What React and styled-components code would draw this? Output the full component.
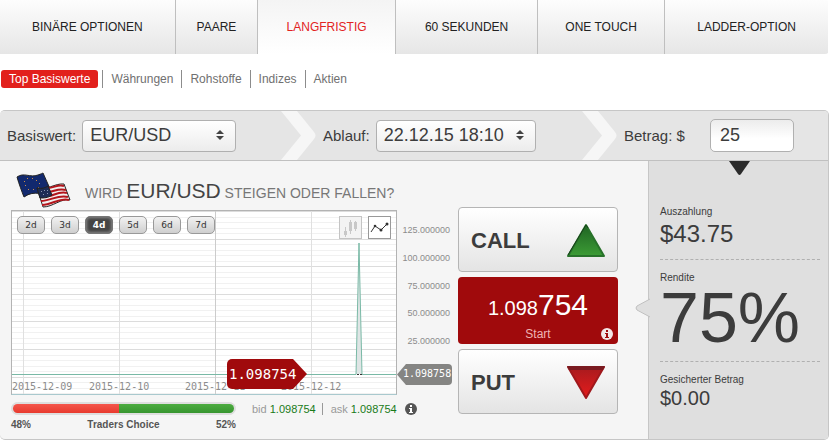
import { useState } from 'react';
import styled, { createGlobalStyle } from 'styled-components';


const GlobalStyle = createGlobalStyle`
    * {
        box-sizing: border-box;
    }
    body {
        margin: 0;
        background: white;
        color: #3c3c3c;
        font-family: "Liberation Sans", Arial, sans-serif;
    }
    button, input, select {
        margin: 0;
        font-family: inherit;
        color: inherit;
    }
`;
const TabBar = styled.nav`
    display: flex;
    height: 54px;
    border-radius: 0 4px 4px 0;
    overflow: hidden;
`;
const Tab = styled.a`
    flex: ${props => props.$grow} 1 0;
    display: flex;
    align-items: center;
    justify-content: center;
    padding-bottom: 1px;
    font-size: 12px;
    text-decoration: none;
    white-space: nowrap;
    color: ${props => props.$active ? '#e2231f' : '#222'};
    background: ${props => props.$active ? 'linear-gradient(#f4f4f4, #fff)' : 'linear-gradient(#fdfdfd, #e6e6e6)'};
    border-right: 1px solid #bfbfbf;
    &:last-child {
        border-right-color: white;
    }
`;
const SubNav = styled.nav`
    display: flex;
    height: 18px;
    margin: 16px 0 22px 1px;
`;
const SubLink = styled.a`
    padding: 0 8px;
    font-size: 12px;
    line-height: 18px;
    text-decoration: none;
    color: ${props => props.$active ? 'white' : '#707070'};
    background: ${props => props.$active ? '#e2201c' : 'none'};
    border-radius: ${props => props.$active ? '3px' : '0'};
    margin-right: ${props => props.$active ? '4px' : '0'};
    & + & {
        border-left: 1px solid #8c8c8c;
    }
`;
const Panel = styled.main`
    border: 1px solid #c6c6c6;
    border-left: none;
    border-radius: 5px;
    background: #f5f5f5;
    overflow: hidden;
`;
const OrderBar = styled.div`
    display: flex;
    height: 50px;
    background: #e5e5e5;
    border-bottom: 1px solid #c0c0c0;
`;
const Step = styled.div`
    flex: ${props => props.$grow} 1 0;
    display: flex;
    align-items: center;
    padding-left: 7px;
    gap: 6px;
`;
const StepLabel = styled.label`
    font-size: 15px;
    white-space: nowrap;
`;
const SelectBox = styled.div`
    position: relative;
    width: ${props => props.$wide ? '160px' : '154px'};
    svg {
        position: absolute;
        right: 12px;
        top: 10px;
        pointer-events: none;
    }
`;
const Select = styled.select`
    appearance: none;
    display: block;
    width: 100%;
    height: 32px;
    padding: 0 7px 2px;
    font-size: 18px;
    border: 1px solid #b0b0b0;
    border-radius: 4px;
    background: linear-gradient(#fff, #ececec);
`;
const AmountInput = styled.input`
    width: 84px;
    height: 33px;
    margin-left: 19px;
    padding: 0 9px;
    font-size: 18px;
    border: 1px solid #b0b0b0;
    border-radius: 5px;
    background: linear-gradient(#ececec, #fff 60%);
`;
const Body = styled.div`
    display: flex;
`;
const Main = styled.section`
    flex: 1;
    min-width: 0;
    padding: 10px 30px 0 11px;
`;
const Question = styled.h1`
    display: flex;
    align-items: center;
    height: 39px;
    margin: 0;
    gap: 13px;
    padding-left: 4px;
    font-size: 14px;
    font-weight: normal;
    color: #777;
    white-space: nowrap;
    strong {
        font-size: 21px;
        font-weight: normal;
        color: #444;
    }
`;
const Trade = styled.div`
    display: flex;
`;
const ChartColumn = styled.div`
    flex: 1;
    min-width: 0;
`;
const Chart = styled.div`
    position: relative;
    height: 185px;
    background: white;
    border: 1px solid #b3b3b3;
    border-bottom-color: #a9c9ce;
    & > svg {
        display: block;
        width: 100%;
        height: 100%;
    }
`;
const Toolbar = styled.div`
    position: absolute;
    top: 5px;
    left: 5px;
    right: 5px;
    display: flex;
    gap: 6px;
`;
const RangeButton = styled.button`
    width: 28px;
    height: 18px;
    padding: 0;
    font: 9px "DejaVu Sans", sans-serif;
    font-weight: ${props => props.$active ? 'bold' : 'normal'};
    line-height: 14px;
    border: 1px solid ${props => props.$active ? '#777' : '#999'};
    border-radius: 5px;
    color: ${props => props.$active ? 'white' : '#333'};
    background: ${props => props.$active ? '#444' : 'linear-gradient(#f2f2f2, #cfcfcf)'};
    box-shadow: ${props => props.$active ? 'inset 0 0 3px 1px #888' : 'none'};
`;
const TypeButton = styled.button`
    width: 23px;
    height: 23px;
    padding: 0;
    border: 1px solid ${props => props.$active ? '#999' : '#c4c4c4'};
    background: ${props => props.$active ? 'white' : '#f3f3f3'};
    svg {
        display: block;
    }
`;
const Spacer = styled.div`
    flex: 1;
`;
const PriceTag = styled.div`
    position: absolute;
    top: 148px;
    left: 215px;
    width: 80px;
    height: 30px;
    padding-left: 2px;
    font: 14px "DejaVu Sans Mono", monospace;
    line-height: 30px;
    color: white;
    background: #a00a0c;
    border-radius: 5px;
    clip-path: polygon(0 0, 66px 0, 100% 50%, 66px 100%, 0 100%);
`;
const Axis = styled.div`
    position: relative;
    width: 61px;
    height: 185px;
    padding-top: 15px;
`;
const AxisLabels = styled.div`
    display: flex;
    flex-direction: column;
    justify-content: space-between;
    height: 122px;
    margin-right: 8px;
    font-size: 9px;
    line-height: 11px;
    text-align: right;
    color: #8c8c8c;
`;
const AxisTag = styled.div`
    position: absolute;
    left: 0;
    top: 154px;
    width: 55px;
    height: 21px;
    padding-left: 6px;
    font: 10px "DejaVu Sans Mono", monospace;
    line-height: 20px;
    color: white;
    background: #858583;
    border-radius: 4px;
    clip-path: polygon(0 50%, 9px 0, 100% 0, 100% 100%, 9px 100%);
`;
const ChartFooter = styled.div`
    display: flex;
    gap: 16px;
    padding-top: 7px;
`;
const Traders = styled.div`
    flex: none;
    width: 225px;
`;
const TradersBar = styled.div`
    display: flex;
    height: 13px;
    padding: 1px;
    border: 1px solid #dedede;
    border-radius: 7px;
    background: #dedede;
    overflow: hidden;
`;
const Share = styled.div`
    background: ${props => props.$up ? 'linear-gradient(#4dac40, #36952f)' : 'linear-gradient(#f4564c, #e83a2e)'};
    border-radius: ${props => props.$up ? '0 6px 6px 0' : '6px 0 0 6px'};
`;
const TradersText = styled.div`
    display: flex;
    justify-content: space-between;
    margin-top: 4px;
    font-size: 10px;
    font-weight: bold;
    line-height: 12px;
    color: #555;
`;
const Quotes = styled.div`
    display: flex;
    align-items: center;
    height: 14px;
    font-size: 11px;
    white-space: nowrap;
    color: #999;
    span + span {
        margin-left: 6px;
        padding-left: 8px;
        border-left: 1px solid #999;
    }
    b {
        font-weight: normal;
        color: #187a18;
    }
    svg {
        flex: none;
        margin-left: 8px;
    }
`;
const Actions = styled.div`
    display: flex;
    flex-direction: column;
    gap: 5px;
    width: 160px;
    margin-top: -3px;
    padding-bottom: 25px;
`;
const ActionButton = styled.button`
    display: flex;
    align-items: center;
    justify-content: space-between;
    height: 65px;
    padding: 2px 11px 0 12px;
    font-size: 22px;
    font-weight: bold;
    border: 1px solid #b5b5b5;
    border-radius: 4px;
    background: linear-gradient(#fff, #e4e4e4);
`;
const StartBox = styled.div`
    position: relative;
    height: 67px;
    padding-top: 11px;
    text-align: center;
    font-size: 20px;
    line-height: 34px;
    color: white;
    background: #a00a0c;
    border-radius: 4px;
    big {
        font-size: 30px;
    }
    svg {
        position: absolute;
        right: 5px;
        bottom: 4px;
    }
`;
const StartText = styled.div`
    font-size: 12px;
    line-height: 18px;
    color: #eeb4b4;
`;
const Side = styled.aside`
    position: relative;
    width: 180px;
    padding: 45px 8px 28px 11px;
    background: #dfdfdf;
    border-left: 1px solid #c6c6c6;
`;
const Caret = styled.svg`
    position: absolute;
    top: 0;
    left: 80px;
`;
const Notch = styled.svg`
    position: absolute;
    top: 137px;
    left: -14px;
`;
const Figure = styled.div`
    & + & {
        margin-top: 9px;
        padding-top: 12px;
        border-top: 1px dashed #b0b0b0;
    }
`;
const FigureLabel = styled.div`
    font-size: 10px;
    line-height: 12px;
`;
const FigureValue = styled.div`
    font-size: ${props => props.$size};
    line-height: ${props => props.$line};
`;

const tabs = [
    {text: 'BINÄRE OPTIONEN', grow: 176},
    {text: 'PAARE', grow: 82},
    {text: 'LANGFRISTIG', grow: 138},
    {text: '60 SEKUNDEN', grow: 142},
    {text: 'ONE TOUCH', grow: 127},
    {text: 'LADDER-OPTION', grow: 164},
];
const groups = ['Top Basiswerte', 'Währungen', 'Rohstoffe', 'Indizes', 'Aktien'];
const ranges = ['2d', '3d', '4d', '5d', '6d', '7d'];
const levels = ['125.000000', '100.000000', '75.000000', '50.000000', '25.000000'];
const days = [
    {text: '2015-12-09', x: 0, line: 11},
    {text: '2015-12-10', x: 77, line: 107},
    {text: '2015-12-11', x: 173, line: 203},
    {text: '2015-12-12', x: 269, line: 299},
];

const Chevron = () => (
    <svg width="35" height="49" viewBox="0 0 35 49">
        <path d="M0 0H16L33 21Q36 24.5 33 28L16 49H0L20 24.5Z" fill="#f6f6f6" />
    </svg>
);

const Arrows = () => (
    <svg width="8" height="10" viewBox="0 0 8 10">
        <path d="M4 0L8 4H0ZM0 6H8L4 10Z" fill="#444" />
    </svg>
);

const InfoIcon = ({bg, fg}) => (
    <svg width="12" height="12" viewBox="0 0 12 12">
        <circle cx="6" cy="6" r="6" fill={bg} />
        <path d="M5 2H7V4H5ZM4 5H7V9H8V10H4V9H5V6H4Z" fill={fg} />
    </svg>
);

const Flags = () => (
    <svg width="57" height="38" viewBox="0 0 57 38">
        <path d="M2 5C9 0 15 6 23 3C26 2 28 1 28 1L36 19C28 25 20 17 9 25C7 20 4 12 2 5Z" fill="#12296e" stroke="#222" />
        <g fill="#c98d4a">
            <rect x="12" y="6" width="1" height="1" />
            <rect x="17" y="6" width="1" height="1" />
            <rect x="21" y="8" width="1" height="1" />
            <rect x="9" y="9" width="1" height="1" />
            <rect x="10" y="13" width="1" height="1" />
            <rect x="13" y="17" width="1" height="1" />
            <rect x="18" y="17" width="1" height="1" />
            <rect x="23" y="15" width="1" height="1" />
            <rect x="24" y="11" width="1" height="1" />
        </g>
        <path d="M22 16C31 19 40 11 49 12L55 28C46 26 38 35 28 35Z" fill="#f2eeee" stroke="#222" />
        <g fill="none" stroke="#b3151b" strokeWidth="2">
            <path d="M33 16C39 16 43 12 49 14" />
            <path d="M34 20C40 19 44 16 51 18" />
            <path d="M35 24C41 22 46 19 52 21" />
            <path d="M26 29C35 29 44 22 53 25" />
            <path d="M27 33C37 33 45 25 54 28" />
        </g>
        <path d="M22 16C27 17 30 16 33 14L37 23C33 26 29 26 25 26Z" fill="#1d2c55" stroke="#222" />
        <g fill="#8c97b5">
            <rect x="26" y="19" width="1" height="1" />
            <rect x="29" y="18" width="1" height="1" />
            <rect x="32" y="18" width="1" height="1" />
            <rect x="28" y="22" width="1" height="1" />
            <rect x="32" y="21" width="1" height="1" />
        </g>
    </svg>
);

const CandleIcon = () => (
    <svg width="21" height="21" viewBox="0 0 21 21" fill="#c8c8c8">
        <path d="M5 10H6V14H7V18H6V20H5V18H4V14H5ZM10 3H11V5H12V14H11V17H10V14H9V5H10ZM15 4H16V5H17V12H16V14H15V12H14V5H15Z" />
    </svg>
);

const LineIcon = () => (
    <svg width="21" height="21" viewBox="0 0 21 21">
        <path d="M2 15L6 9L12 13L18 7" fill="none" stroke="#333" />
        <circle cx="6" cy="9" r="1.3" fill="#333" />
        <circle cx="12" cy="13" r="1.5" fill="#333" />
        <circle cx="18" cy="7" r="1.5" fill="#333" />
    </svg>
);

const PriceGraph = () => (
    <svg viewBox="0 0 384 183" preserveAspectRatio="none">
        {Array.from({length: 34}, (_, i) => (
            <rect key={i} x="0" y={Math.round(i * 5.52)} width="384" height="1" fill={i % 5 === 0 ? '#dcdcdc' : '#f1f1f1'} />
        ))}
        {days.map(day => (
            <rect key={day.line} x={day.line} y="0" width="1" height="183" fill={day.line === 203 ? '#cccccc' : '#e0e0e0'} />
        ))}
        {days.map(day => (
            <text key={day.text} x={day.x} y="179" fontSize="10" fontFamily='"DejaVu Sans Mono", monospace' fill="#8c8c8c">{day.text}</text>
        ))}
        <path d="M344 163L347 32L350 163Z" fill="#dfe5e5" />
        <path d="M0 163.500H344L347 32L350 163.500H384" fill="none" stroke="#79b9a6" />
        <path d="M345 163.500H350" stroke="#333" strokeDasharray="2 1" />
    </svg>
);

export default function App() {
    const [range, setRange] = useState('4d');
    const [chartType, setChartType] = useState('line');
    const [amount, setAmount] = useState('25');

    return (
        <>
            <GlobalStyle />
            <TabBar>
                {tabs.map(tab => (
                    <Tab key={tab.text} href="#" $grow={tab.grow} $active={tab.text === 'LANGFRISTIG'}>{tab.text}</Tab>
                ))}
            </TabBar>
            <SubNav>
                {groups.map((group, i) => (
                    <SubLink key={group} href="#" $active={i === 0}>{group}</SubLink>
                ))}
            </SubNav>
            <Panel>
                <OrderBar>
                    <Step $grow={274}>
                        <StepLabel htmlFor="asset">Basiswert:</StepLabel>
                        <SelectBox>
                            <Select id="asset">
                                <option>EUR/USD</option>
                            </Select>
                            <Arrows />
                        </SelectBox>
                    </Step>
                    <Chevron />
                    <Step $grow={259}>
                        <StepLabel htmlFor="expiry">Ablauf:</StepLabel>
                        <SelectBox $wide>
                            <Select id="expiry">
                                <option>22.12.15 18:10</option>
                            </Select>
                            <Arrows />
                        </SelectBox>
                    </Step>
                    <Chevron />
                    <Step $grow={204}>
                        <StepLabel htmlFor="amount">Betrag: $</StepLabel>
                        <AmountInput id="amount" value={amount} onChange={e => setAmount(e.target.value)} />
                    </Step>
                </OrderBar>
                <Body>
                    <Main>
                        <Question>
                            <Flags />
                            <span>WIRD <strong>EUR/USD</strong> STEIGEN ODER FALLEN?</span>
                        </Question>
                        <Trade>
                            <ChartColumn>
                                <Chart>
                                    <PriceGraph />
                                    <Toolbar>
                                        {ranges.map(item => (
                                            <RangeButton key={item} $active={item === range} onClick={() => setRange(item)}>{item}</RangeButton>
                                        ))}
                                        <Spacer />
                                        <TypeButton aria-label="Kerzen" $active={chartType === 'candle'} onClick={() => setChartType('candle')}>
                                            <CandleIcon />
                                        </TypeButton>
                                        <TypeButton aria-label="Linie" $active={chartType === 'line'} onClick={() => setChartType('line')}>
                                            <LineIcon />
                                        </TypeButton>
                                    </Toolbar>
                                    <PriceTag>1.098754</PriceTag>
                                </Chart>
                                <ChartFooter>
                                    <Traders>
                                        <TradersBar>
                                            <Share style={{width: '48%'}} />
                                            <Share $up style={{width: '52%'}} />
                                        </TradersBar>
                                        <TradersText>
                                            <span>48%</span>
                                            <span>Traders Choice</span>
                                            <span>52%</span>
                                        </TradersText>
                                    </Traders>
                                    <Quotes>
                                        <span>bid <b>1.098754</b></span>
                                        <span>ask <b>1.098754</b></span>
                                        <InfoIcon bg="#555" fg="white" />
                                    </Quotes>
                                </ChartFooter>
                            </ChartColumn>
                            <Axis>
                                <AxisLabels>
                                    {levels.map(level => <span key={level}>{level}</span>)}
                                </AxisLabels>
                                <AxisTag>1.098758</AxisTag>
                            </Axis>
                            <Actions>
                                <ActionButton>
                                    CALL
                                    <svg width="40" height="36" viewBox="0 0 40 36">
                                        <defs>
                                            <linearGradient id="up" x1="0" y1="0" x2="0" y2="1">
                                                <stop offset="0" stopColor="#1f6423" />
                                                <stop offset="1" stopColor="#3c9c35" />
                                            </linearGradient>
                                        </defs>
                                        <path d="M20 2L38 33H2Z" fill="url(#up)" stroke="#28722a" strokeWidth="2" strokeLinejoin="round" />
                                        <path d="M2 32L20 2L22 5" fill="none" stroke="#173f1a" />
                                    </svg>
                                </ActionButton>
                                <StartBox>
                                    1.098<big>754</big>
                                    <StartText>Start</StartText>
                                    <InfoIcon bg="#f3e6e6" fg="#a00a0c" />
                                </StartBox>
                                <ActionButton>
                                    PUT
                                    <svg width="40" height="36" viewBox="0 0 40 36">
                                        <defs>
                                            <linearGradient id="down" x1="0" y1="0" x2="0" y2="1">
                                                <stop offset="0" stopColor="#a81a1e" />
                                                <stop offset="1" stopColor="#e51c1c" />
                                            </linearGradient>
                                        </defs>
                                        <path d="M2 2H38L20 33Z" fill="url(#down)" stroke="#a0181c" strokeWidth="2" strokeLinejoin="round" />
                                        <path d="M1 1H39L37 5H3Z" fill="#7a1a20" />
                                    </svg>
                                </ActionButton>
                            </Actions>
                        </Trade>
                    </Main>
                    <Side>
                        <Caret width="21" height="14" viewBox="0 0 21 14">
                            <path d="M0 0H21L12 13Q10.500 15 9 13Z" fill="#2b2b2b" />
                        </Caret>
                        <Notch width="15" height="20" viewBox="0 0 15 20">
                            <path d="M15 1L2 8Q0 10 2 12L15 19" fill="#dfdfdf" stroke="#c0c0c0" />
                        </Notch>
                        <Figure>
                            <FigureLabel>Auszahlung</FigureLabel>
                            <FigureValue $size="24px" $line="32px">$43.75</FigureValue>
                        </Figure>
                        <Figure>
                            <FigureLabel>Rendite</FigureLabel>
                            <FigureValue $size="70px" $line="68px">75%</FigureValue>
                        </Figure>
                        <Figure>
                            <FigureLabel>Gesicherter Betrag</FigureLabel>
                            <FigureValue $size="20px" $line="24px">$0.00</FigureValue>
                        </Figure>
                    </Side>
                </Body>
            </Panel>
        </>
    );
}
